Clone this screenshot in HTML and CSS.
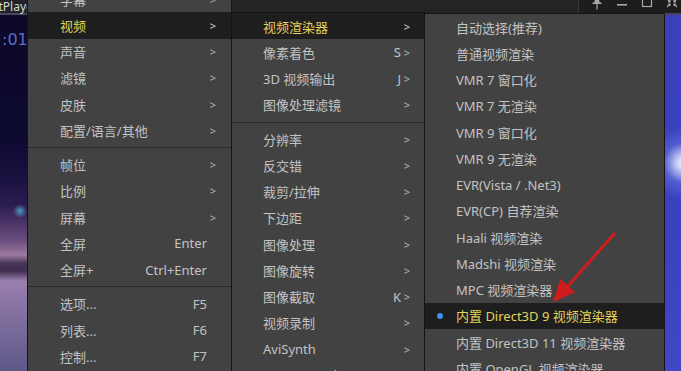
FILE: index.html
```html
<!DOCTYPE html>
<html lang="zh-CN">
<head>
    <meta charset="UTF-8">
    <meta name="viewport" content="width=device-width, initial-scale=1.0">
    <title>PotPlayer - 视频渲染器</title>
    <link rel="stylesheet" href="styles.css">
</head>
<body>
    <div class="screen">
        <div class="titlebar">
            <div class="title">PotPlayer</div>
            <div class="controls">
                <div class="ctl">
                    <svg width="12" height="12" viewBox="0 0 12 12"><path d="M4 0H8L8.6 4.5H3.4Z M1.5 4.5H10.5V6H1.5Z M5.4 6H6.6V11.5H5.4Z" fill="#a9a9a9"/></svg>
                </div>
                <div class="ctl">
                    <svg width="12" height="12" viewBox="0 0 12 12"><rect x="1" y="6" width="10" height="1.6" fill="#a9a9a9"/></svg>
                </div>
                <div class="ctl">
                    <svg width="12" height="12" viewBox="0 0 12 12"><rect x="1.5" y="0.5" width="9" height="8" fill="none" stroke="#a9a9a9" stroke-width="1.2"/></svg>
                </div>
                <div class="ctl">
                    <svg width="12" height="12" viewBox="0 0 12 12"><path d="M1 1L4 4M11 1L8 4M1 9L4 6M11 9L8 6M4 2V4H2M8 2V4H10M4 8V6H2M8 8V6H10" fill="none" stroke="#a9a9a9" stroke-width="1.1"/></svg>
                </div>
            </div>
        </div>

        <div class="video">
            <div class="time">:01</div>
        </div>

        <!-- main context menu -->
        <div class="menu menu-main">
            <div class="item"><span class="label">字幕</span><span class="arrow">&gt;</span></div>
            <div class="item active"><span class="label">视频</span><span class="arrow">&gt;</span></div>
            <div class="item"><span class="label">声音</span><span class="arrow">&gt;</span></div>
            <div class="item"><span class="label">滤镜</span><span class="arrow">&gt;</span></div>
            <div class="item"><span class="label">皮肤</span><span class="arrow">&gt;</span></div>
            <div class="item"><span class="label">配置/语言/其他</span><span class="arrow">&gt;</span></div>
            <div class="sep"></div>
            <div class="item"><span class="label">帧位</span><span class="arrow">&gt;</span></div>
            <div class="item"><span class="label">比例</span><span class="arrow">&gt;</span></div>
            <div class="item"><span class="label">屏幕</span><span class="arrow">&gt;</span></div>
            <div class="item"><span class="label">全屏</span><span class="key">Enter</span><span class="arrow"></span></div>
            <div class="item"><span class="label">全屏+</span><span class="key">Ctrl+Enter</span><span class="arrow"></span></div>
            <div class="sep"></div>
            <div class="item"><span class="label">选项...</span><span class="key">F5</span><span class="arrow"></span></div>
            <div class="item"><span class="label">列表...</span><span class="key">F6</span><span class="arrow"></span></div>
            <div class="item"><span class="label">控制...</span><span class="key">F7</span><span class="arrow"></span></div>
            <div class="item"><span class="label">关于...</span><span class="key">F1</span><span class="arrow"></span></div>
        </div>

        <!-- 视频 submenu -->
        <div class="menu menu-video">
            <div class="item active"><span class="label">视频渲染器</span><span class="arrow">&gt;</span></div>
            <div class="item"><span class="label">像素着色</span><span class="key">S</span><span class="arrow">&gt;</span></div>
            <div class="item"><span class="label">3D 视频输出</span><span class="key">J</span><span class="arrow">&gt;</span></div>
            <div class="item"><span class="label">图像处理滤镜</span><span class="arrow">&gt;</span></div>
            <div class="sep"></div>
            <div class="item"><span class="label">分辨率</span><span class="arrow">&gt;</span></div>
            <div class="item"><span class="label">反交错</span><span class="arrow">&gt;</span></div>
            <div class="item"><span class="label">裁剪/拉伸</span><span class="arrow">&gt;</span></div>
            <div class="item"><span class="label">下边距</span><span class="arrow">&gt;</span></div>
            <div class="item"><span class="label">图像处理</span><span class="arrow">&gt;</span></div>
            <div class="item"><span class="label">图像旋转</span><span class="arrow">&gt;</span></div>
            <div class="item"><span class="label">图像截取</span><span class="key">K</span><span class="arrow">&gt;</span></div>
            <div class="item"><span class="label">视频录制</span><span class="arrow">&gt;</span></div>
            <div class="item"><span class="label">AviSynth</span><span class="arrow">&gt;</span></div>
            <div class="item"><span class="label">VapourSynth</span><span class="arrow">&gt;</span></div>
        </div>

        <!-- 视频渲染器 submenu -->
        <div class="menu menu-render">
            <div class="item"><span class="mark"></span><span class="label">自动选择(推荐)</span></div>
            <div class="item"><span class="mark"></span><span class="label">普通视频渲染</span></div>
            <div class="item"><span class="mark"></span><span class="label">VMR 7 窗口化</span></div>
            <div class="item"><span class="mark"></span><span class="label">VMR 7 无渲染</span></div>
            <div class="item"><span class="mark"></span><span class="label">VMR 9 窗口化</span></div>
            <div class="item"><span class="mark"></span><span class="label">VMR 9 无渲染</span></div>
            <div class="item"><span class="mark"></span><span class="label">EVR(Vista / .Net3)</span></div>
            <div class="item"><span class="mark"></span><span class="label">EVR(CP) 自荐渲染</span></div>
            <div class="item"><span class="mark"></span><span class="label">Haali 视频渲染</span></div>
            <div class="item"><span class="mark"></span><span class="label">Madshi 视频渲染</span></div>
            <div class="item"><span class="mark"></span><span class="label">MPC 视频渲染器</span></div>
            <div class="item active"><span class="mark"><span class="dot"></span></span><span class="label">内置 Direct3D 9 视频渲染器</span></div>
            <div class="item"><span class="mark"></span><span class="label">内置 Direct3D 11 视频渲染器</span></div>
            <div class="item"><span class="mark"></span><span class="label">内置 OpenGL 视频渲染器</span></div>
        </div>

        <svg class="callout" width="681" height="371" viewBox="0 0 681 371">
            <line x1="614" y1="234" x2="568" y2="286" stroke="#cf1c1c" stroke-width="3" stroke-linecap="round"/>
            <polygon points="553,302 560.4,279 575.2,292.4" fill="#cf1c1c"/>
        </svg>
    </div>
</body>
</html>
```

FILE: styles.css
```css
:root {
    --menu-bg: #424242;
    --menu-border: #141414;
    --menu-text: #c3c3c3;
    --active-bg: #1e1e1e;
    --active-text: #e2d35a;
}

body {
    margin: 0;
    background: #000;
}

.screen {
    position: relative;
    width: 681px;
    height: 371px;
    overflow: hidden;
    font-family: "Noto Sans", "Noto Sans CJK SC", sans-serif;
}

/* player title bar */
.titlebar {
    display: flex;
    height: 13px;
    background: #242424;
    border-bottom: 2px solid #45475c;
}

.title {
    margin-left: -16px;
    color: #d6d6d6;
    font-size: 12px;
    line-height: 13px;
    white-space: nowrap;
}

.controls {
    margin-left: auto;
    display: flex;
    width: 103px;
    box-sizing: border-box;
    padding-left: 5px;
    background: #1d1d1d;
    border-left: 1px solid #383838;
}

.ctl {
    width: 25px;
    flex-shrink: 0;
    display: flex;
    justify-content: center;
    align-items: flex-end;
}

.ctl svg {
    margin-bottom: 3px;
}

/* video frame behind the menus */
.video {
    height: 356px;
    box-sizing: border-box;
    padding: 17px 0 0 2px;
    background:
        radial-gradient(circle at 684px 148px, rgba(255,255,255,0.98) 0, rgba(225,232,255,0.85) 7px, rgba(130,150,245,0.35) 20px, rgba(90,100,220,0) 36px),
        radial-gradient(circle at 20px 196px, rgba(90,200,235,0.7) 0, rgba(90,200,235,0) 7px),
        linear-gradient(180deg, #0b0828 0, #0d0a30 120px, #170f3c 155px, #2a1c50 190px, #6a4c7e 225px, #9a7a9e 240px, #4a3658 248px, #3e2e50 256px, #9c80b0 266px, #8a76a6 286px, #5e5888 356px) 0 0 / 28px 100% no-repeat,
        linear-gradient(180deg, #3a40b8 0, #3a41c0 200px, #4048c4 356px);
}

.time {
    color: #5d6cc4;
    font-family: "DejaVu Sans", sans-serif;
    font-size: 16px;
    line-height: 1;
}

/* context menus */
.menu {
    position: absolute;
    box-sizing: border-box;
    background: var(--menu-bg);
    border: 1px solid var(--menu-border);
    color: var(--menu-text);
    font-size: 13px;
}

.menu-main {
    left: 27px;
    top: -15px;
    width: 205px;
}

.menu-video {
    left: 231px;
    top: 12px;
    width: 194px;
}

.menu-render {
    left: 424px;
    top: 13px;
    width: 241px;
}

.item {
    display: flex;
    align-items: center;
    height: 26.25px;
    padding: 0 13px 0 32px;
    white-space: nowrap;
}

.menu-video .item {
    padding: 0 12px 0 31px;
}

.menu-render .item {
    padding: 0 12px;
}

.item.active {
    background: var(--active-bg);
    color: var(--active-text);
}

.label {
    flex: 1;
}

.key {
    margin-right: 1px;
}

.arrow {
    width: 10px;
    text-align: center;
    font-size: 11px;
    color: #b5b5b5;
}

.item.active .arrow {
    color: #d8d8d8;
}

.mark {
    width: 19px;
    display: flex;
    align-items: center;
}

.dot {
    width: 6px;
    height: 6px;
    border-radius: 50%;
    background: #3d8ff2;
}

.sep {
    height: 8px;
    display: flex;
    align-items: center;
}

.sep::before {
    content: '';
    flex: 1;
    height: 1px;
    background: #2b2b2b;
}

/* red annotation arrow drawn over the screenshot */
.callout {
    position: absolute;
    left: 0;
    top: 0;
    pointer-events: none;
}
```
